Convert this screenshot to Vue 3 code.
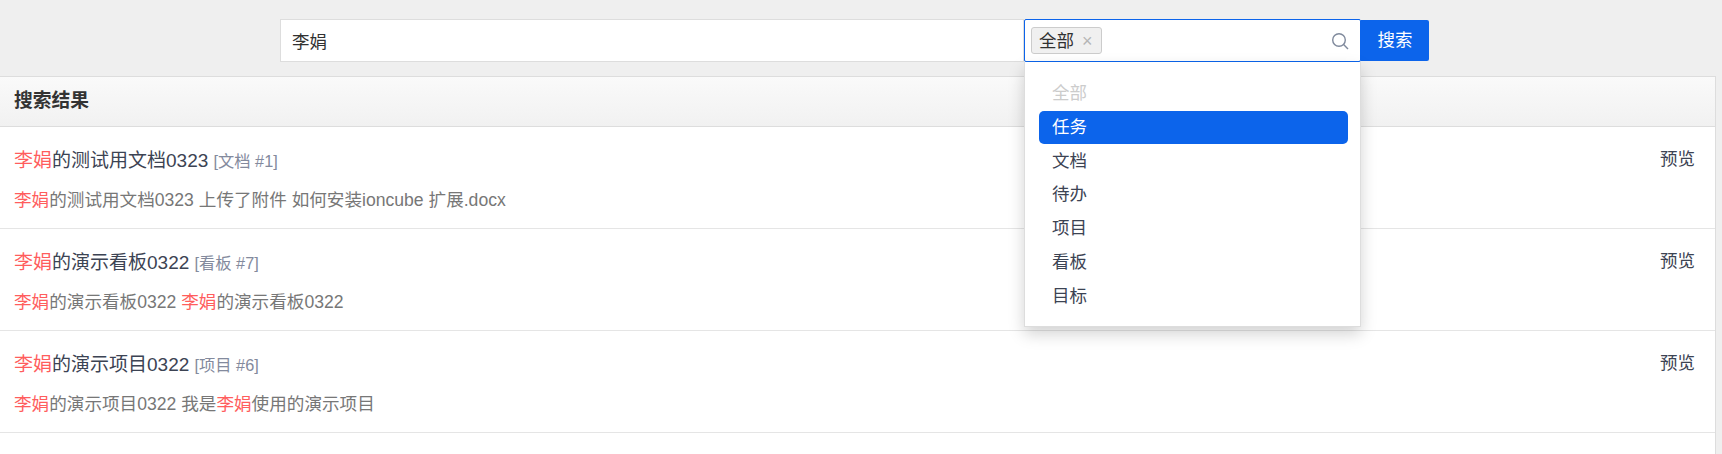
<script setup>
const options = ['全部', '任务', '文档', '待办', '项目', '看板', '目标']
const rows = [
  {
    title: '的测试用文档0323', meta: '[文档 #1]',
    desc: [['李娟', true], ['的测试用文档0323 上传了附件 如何安装ioncube 扩展.docx', false]]
  },
  {
    title: '的演示看板0322', meta: '[看板 #7]',
    desc: [['李娟', true], ['的演示看板0322 ', false], ['李娟', true], ['的演示看板0322', false]]
  },
  {
    title: '的演示项目0322', meta: '[项目 #6]',
    desc: [['李娟', true], ['的演示项目0322 我是', false], ['李娟', true], ['使用的演示项目', false]]
  }
]
</script>

<template>
  <div class="page">
    <div class="search">
      <div class="keyword">李娟</div>
      <div class="picker">
        <div class="select">
          <span class="tag"><span class="tag-text">全部</span><span class="close">×</span></span>
          <svg class="icon" width="18" height="18" viewBox="0 0 18 18" fill="none" stroke="#7f899c" stroke-width="1.4">
            <circle cx="8" cy="8" r="6.3" />
            <path d="M12.6 12.6 17 17" />
          </svg>
        </div>
        <div class="menu">
          <div
            v-for="(o, i) in options"
            :key="o"
            class="option"
            :class="{ off: i === 0, on: i === 1 }"
          >{{ o }}</div>
        </div>
      </div>
      <div class="go">搜索</div>
    </div>
    <section class="panel">
      <h2 class="head">搜索结果</h2>
      <div v-for="r in rows" :key="r.meta" class="row">
        <div class="main">
          <div class="title"><em>李娟</em>{{ r.title }} <small>{{ r.meta }}</small></div>
          <div class="desc"><template v-for="(d, i) in r.desc" :key="i"><em v-if="d[1]">{{ d[0] }}</em><template v-else>{{ d[0] }}</template></template></div>
        </div>
        <div class="view">预览</div>
      </div>
    </section>
  </div>
</template>

<style>
html, body { margin: 0; background: #efefef; overflow: hidden; }
</style>

<style scoped>
.page {
  width: 1722px;
  height: 454px;
  overflow: hidden;
  font-family: "Liberation Sans", "Noto Sans CJK SC", sans-serif;
  font-size: 17.5px;
  color: #3c4353;
  background: #efefef;
}
.search {
  display: flex;
  align-items: flex-start;
  height: 76px;
  padding: 19px 0 0 280px;
  box-sizing: border-box;
}
.keyword {
  width: 744px;
  height: 43px;
  box-sizing: border-box;
  padding: 2px 11px 0;
  line-height: 41px;
  background: #fff;
  border: 1px solid #ddd;
  color: #313131;
}
.picker { position: relative; z-index: 2; width: 337px; }
.select {
  display: flex;
  align-items: center;
  justify-content: space-between;
  height: 43px;
  box-sizing: border-box;
  padding: 0 11px 0 6px;
  background: #fff;
  border: 1px solid #0c64eb;
  border-radius: 2px;
}
.tag {
  display: flex;
  align-items: center;
  height: 27px;
  box-sizing: border-box;
  padding: 0 7px;
  background: #f0f0f0;
  border: 1px solid #ccc;
  border-radius: 3px;
  color: #313131;
}
.tag-text { margin-bottom: 3px; }
.close { margin: 2px 1px 0 8px; color: #b5b5b5; font-size: 18px; }
.menu {
  position: absolute;
  top: 43px;
  left: 0;
  right: 0;
  box-sizing: border-box;
  height: 265px;
  padding: 15px 12px 0 14px;
  background: #fff;
  border: 1px solid #ddd;
  border-top: 0;
  box-shadow: 0 7px 15px rgba(0, 0, 0, .175);
}
.option {
  height: 33.75px;
  line-height: 33.75px;
  padding: 0 13px;
  border-radius: 5px;
}
.off { color: #ccc; }
.on { background: #0c64eb; color: #fff; height: 33px; line-height: 33px; margin: .4px 0; }
.go {
  width: 68px;
  height: 41px;
  margin-top: 1px;
  line-height: 41px;
  text-align: center;
  background: #0c64eb;
  color: #fff;
  border-radius: 0 2px 2px 0;
}
.panel {
  width: 1716px;
  height: 378px;
  box-sizing: border-box;
  background: #fff;
  border-top: 1px solid #ddd;
  border-right: 1px solid #ddd;
}
.head {
  margin: 0;
  height: 50px;
  box-sizing: border-box;
  padding: 0 14px;
  line-height: 48px;
  font-size: 18.75px;
  font-weight: 700;
  color: #333;
  background: linear-gradient(#fafafa, #f1f1f1);
  border-bottom: 1px solid #ddd;
}
.row {
  display: flex;
  justify-content: space-between;
  height: 102px;
  box-sizing: border-box;
  padding: 16px 20px 0 14px;
  border-bottom: 1px solid #e5e5e5;
}
.title { height: 36px; line-height: 36px; font-size: 19px; }
small { font-size: 16.25px; color: #838a9d; }
.desc { margin-top: 6px; line-height: 30px; font-size: 17.6px; color: #777; }
em { font-style: normal; color: #ff5d5d; }
.view { margin-top: -2px; line-height: 36px; }
</style>
